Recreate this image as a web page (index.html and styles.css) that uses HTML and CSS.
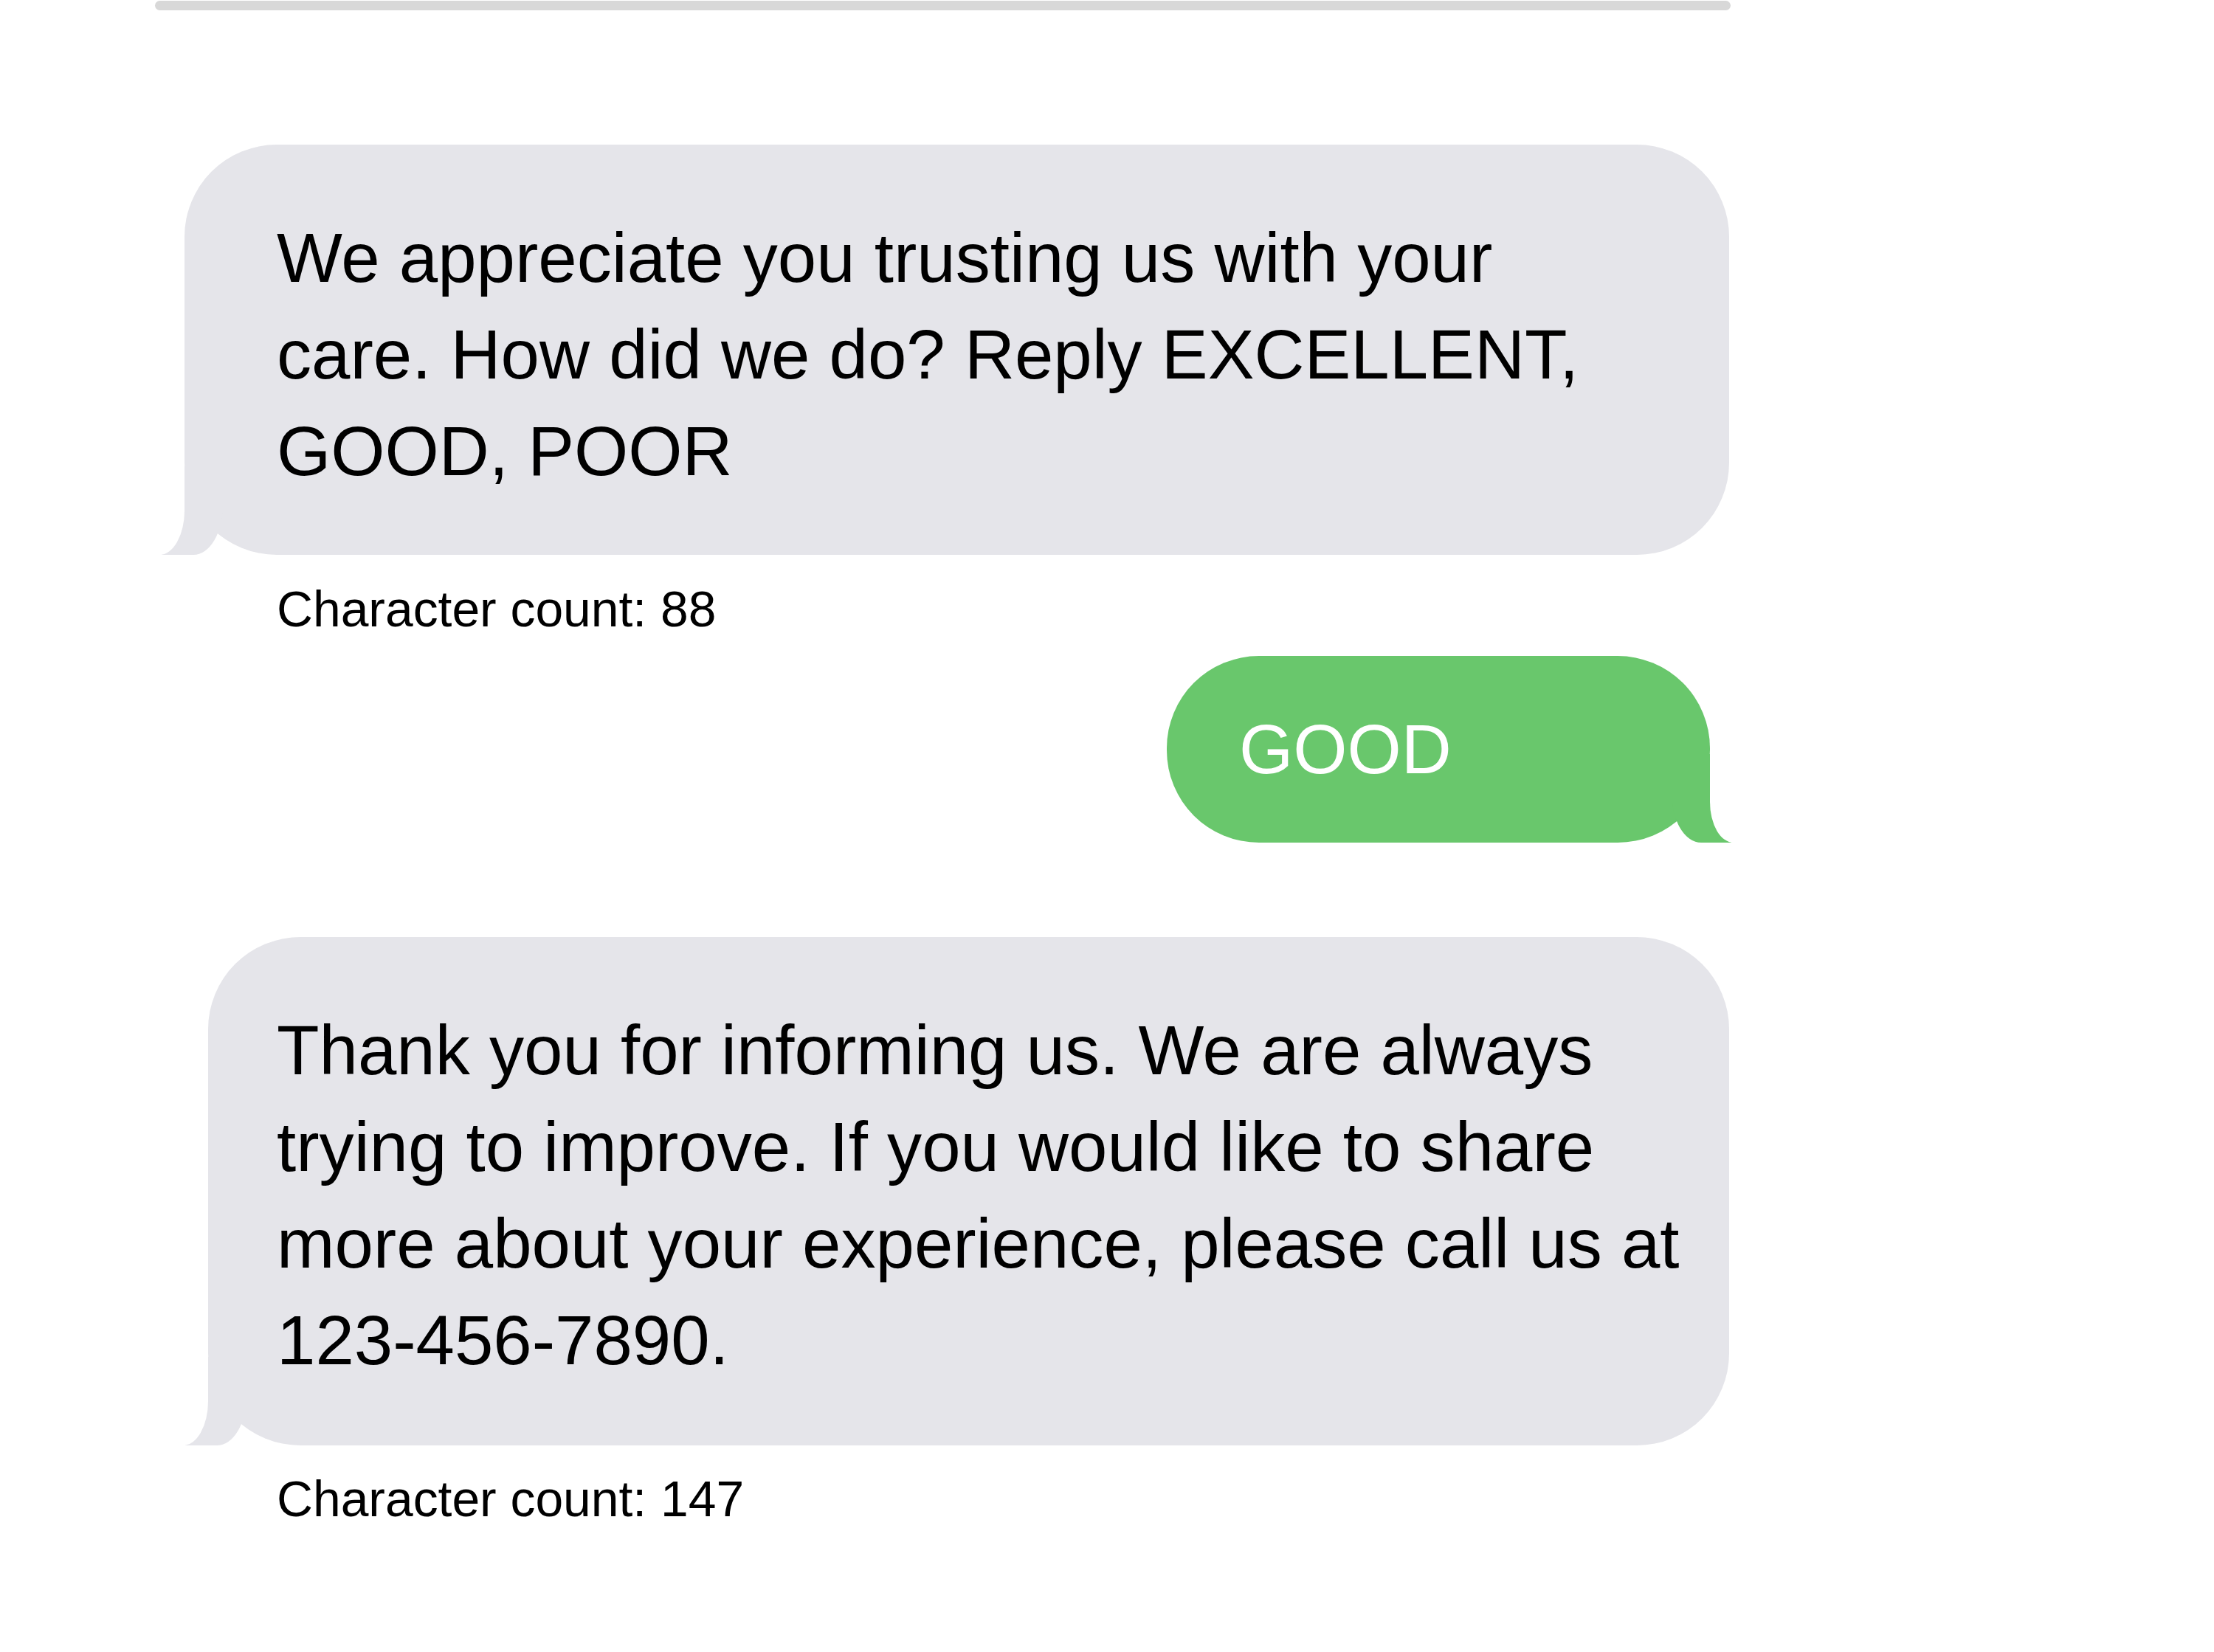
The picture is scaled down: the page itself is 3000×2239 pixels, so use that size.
FILE: index.html
```
<!DOCTYPE html>
<html lang="en">
<head>
<meta charset="utf-8">
<title>Messages</title>
<link rel="stylesheet" href="styles.css">
</head>
<body>
<div class="thread">
  <div class="bar"></div>
  <div class="bubble them first"><p class="msg">We appreciate you trusting us with your care. How did we do? Reply EXCELLENT, GOOD, POOR</p></div>
  <div class="count">Character count: 88</div>
  <div class="bubble me"><p class="msg">GOOD</p></div>
  <div class="bubble them second"><p class="msg">Thank you for informing us. We are always trying to improve. If you would like to share more about your experience, please call us at 123-456-7890.</p></div>
  <div class="count">Character count: 147</div>
</div>
</body>
</html>
```
FILE: styles.css
```
html, body {
  margin: 0;
  padding: 0;
  background: #ffffff;
}
body {
  font-family: "Liberation Sans", Arial, sans-serif;
  color: #000000;
}
.thread {
  display: flex;
  flex-direction: column;
  align-items: flex-start;
  width: 2135px;
  margin-left: 210px;
}
.bar {
  align-self: stretch;
  height: 13px;
  margin-top: 1px;
  border-radius: 7px;
  background: #d8d8d8;
}
.bubble {
  position: relative;
  z-index: 0;
  box-sizing: border-box;
  border-radius: 125px;
}
.msg {
  margin: 0;
  font-size: 94.2px;
  line-height: 131px;
}
.them {
  background: #e5e5ea;
}
.them::before,
.them::after,
.me::before,
.me::after {
  content: "";
  position: absolute;
  bottom: 0;
  height: 120px;
  z-index: -1;
}
.them::before {
  left: -31px;
  width: 83px;
  background: #e5e5ea;
  border-bottom-right-radius: 40px 67px;
}
.them::after {
  left: -120px;
  width: 120px;
  background: #ffffff;
  border-bottom-right-radius: 34px 60px;
}
.first {
  margin-top: 182px;
  margin-left: 40px;
  width: 2093px;
  padding: 88px 153px 75px 125px;
}
.second {
  margin-top: 128px;
  margin-left: 72px;
  width: 2061px;
  padding: 88px 36px 77px 93px;
}
.count {
  margin-left: 165px;
  font-size: 67.8px;
  line-height: 77px;
}
.first + .count {
  margin-top: 35px;
}
.second + .count {
  margin-top: 34px;
}
.me {
  margin-top: 25px;
  margin-left: 1371px;
  width: 736px;
  padding: 61px 0 61px 98px;
  background: #69c76c;
  color: #ffffff;
}
.me::before {
  right: -29px;
  width: 81px;
  background: #69c76c;
  border-bottom-left-radius: 40px 67px;
}
.me::after {
  right: -120px;
  width: 120px;
  background: #ffffff;
  border-bottom-left-radius: 32px 55px;
}
```
